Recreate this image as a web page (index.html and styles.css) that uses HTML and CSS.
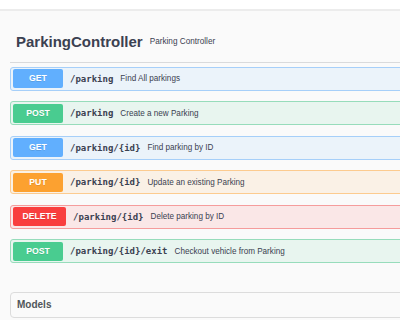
FILE: index.html
```html
<!DOCTYPE html>
<html lang="en">
<head>
    <meta charset="UTF-8">
    <meta name="viewport" content="width=device-width, initial-scale=1.0">
    <title>Parking API</title>
    <link rel="stylesheet" href="styles.css">
</head>
<body>
<div class="topbar"></div>
<div class="wrapper">
    <section class="tag-section">
        <h3 class="tag-header">
            <span class="tag-name">ParkingController</span>
            <small class="tag-desc">Parking Controller</small>
        </h3>
        <div class="opblock opblock-get">
            <span class="method">GET</span>
            <span class="path">/parking</span>
            <span class="summary">Find All parkings</span>
        </div>
        <div class="opblock opblock-post">
            <span class="method">POST</span>
            <span class="path">/parking</span>
            <span class="summary">Create a new Parking</span>
        </div>
        <div class="opblock opblock-get">
            <span class="method">GET</span>
            <span class="path">/parking/{id}</span>
            <span class="summary">Find parking by ID</span>
        </div>
        <div class="opblock opblock-put">
            <span class="method">PUT</span>
            <span class="path">/parking/{id}</span>
            <span class="summary">Update an existing Parking</span>
        </div>
        <div class="opblock opblock-delete">
            <span class="method">DELETE</span>
            <span class="path">/parking/{id}</span>
            <span class="summary">Delete parking by ID</span>
        </div>
        <div class="opblock opblock-post">
            <span class="method">POST</span>
            <span class="path">/parking/{id}/exit</span>
            <span class="summary">Checkout vehicle from Parking</span>
        </div>
    </section>
    <section class="models">
        <h4>Models</h4>
    </section>
</div>
</body>
</html>
```

FILE: styles.css
```css
body {
    font-family: "Liberation Sans", Arial, sans-serif;
    margin: 0;
    padding: 0;
    background-color: #fafafa;
    color: #3b4151;
    overflow: hidden;
}
.topbar {
    height: 9px;
    background: white;
    border-bottom: 2px solid #ececec;
}
.wrapper {
    margin-left: 10px;
    width: 420px;
}
.tag-header {
    display: flex;
    align-items: center;
    margin: 0;
    padding: 21px 0 10px 6px;
    line-height: 20px;
    border-bottom: 1px solid #d9dadc;
}
.tag-name {
    font-size: 15px;
    font-weight: bold;
}
.tag-desc {
    margin-left: 7px;
    font-size: 8.2px;
    font-weight: normal;
}
.opblock {
    display: flex;
    align-items: center;
    padding: 1.5px 2px;
    border: 1px solid;
    border-radius: 3px;
    margin-bottom: 10.5px;
}
.tag-header + .opblock {
    margin-top: 3.7px;
}
.method {
    min-width: 50px;
    height: 19px;
    line-height: 19px;
    padding: 0 9.4px;
    box-sizing: border-box;
    text-align: center;
    font-size: 8.7px;
    font-weight: bold;
    color: white;
    border-radius: 2px;
    text-shadow: 0 1px 0 rgba(0, 0, 0, 0.1);
}
.path {
    padding: 0 7px;
    font-family: "DejaVu Sans Mono", monospace;
    font-size: 9px;
    font-weight: bold;
}
.summary {
    font-size: 8.15px;
}
.opblock-get {
    background: #ebf3fa;
    border-color: #a6cff9;
}
.opblock-get .method {
    background: #61affe;
}
.opblock-post {
    background: #e8f5ef;
    border-color: #97dcbb;
}
.opblock-post .method {
    background: #49cc90;
}
.opblock-put {
    background: #faf1e6;
    border-color: #fccb8f;
}
.opblock-put .method {
    background: #fca130;
}
.opblock-delete {
    background: #fae7e7;
    border-color: #f59c9c;
}
.opblock-delete .method {
    background: #f93e3e;
}
.models {
    margin-top: 29px;
    border: 1px solid #dcdcdc;
    border-radius: 4px;
    padding: 0 6px;
}
.models h4 {
    margin: 0;
    line-height: 24px;
    font-size: 10px;
    font-weight: bold;
    color: #505559;
}
```
